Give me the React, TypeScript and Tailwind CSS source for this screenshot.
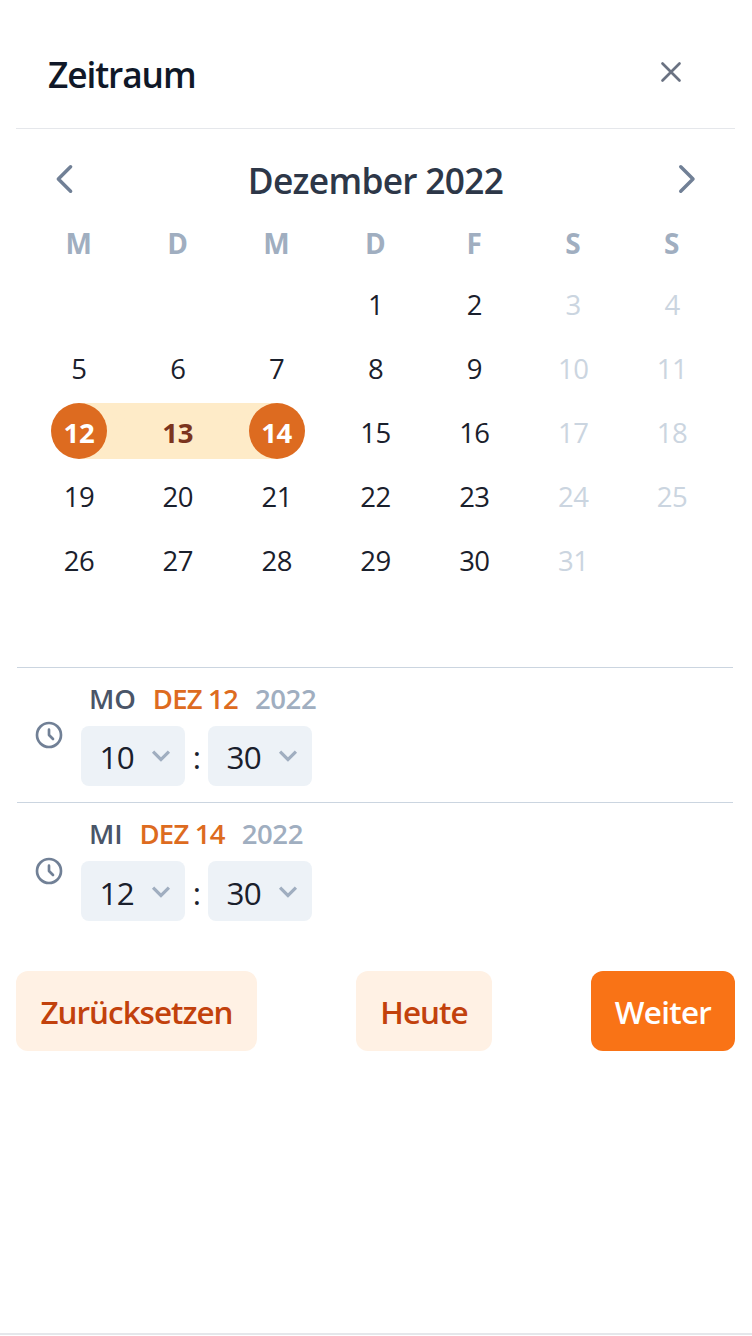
import React from "react";

const weekdays = ["M", "D", "M", "D", "F", "S", "S"];
const cells: (number | null)[] = [null, null, null, ...Array.from({ length: 31 }, (_, i) => i + 1), null];

function Chevron({ dir }: { dir: "left" | "right" }) {
  return (
    <svg className="h-[42px] w-[42px] text-[#718096]" viewBox="0 0 24 24" fill="none" stroke="currentColor" strokeWidth="2" strokeLinecap="round" strokeLinejoin="round">
      <path d={dir === "left" ? "M15.2 19l-7-7 7-7" : "M9 5l7 7-7 7"} />
    </svg>
  );
}

function Day({ day, weekend }: { day: number | null; weekend: boolean }) {
  if (day === null) return <div className="h-16" />;
  if (day === 12 || day === 14) {
    return (
      <div
        className={
          day === 12
            ? "my-1 flex h-14 justify-center bg-linear-to-r from-transparent from-50% to-[#feebc8] to-50%"
            : "my-1 flex h-14 justify-center bg-linear-to-l from-transparent from-50% to-[#feebc8] to-50%"
        }
      >
        <button className="h-14 w-14 rounded-full bg-[#dd6b20] pt-[3px] font-bold tracking-[-0.3px] text-white">{day}</button>
      </div>
    );
  }
  if (day === 13) {
    return (
      <div className="my-1 flex h-14 items-center justify-center bg-[#feebc8] pt-[3px] font-bold tracking-[-0.3px] text-[#7b341e]">{day}</div>
    );
  }
  return (
    <div className={weekend ? "flex h-16 items-center justify-center pt-[3px] text-[#cbd5e0]" : "flex h-16 items-center justify-center pt-[3px] text-[#1a202c]"}>
      {day}
    </div>
  );
}

function Select({ value }: { value: string }) {
  return (
    <button className="flex h-[60px] w-[104px] items-center justify-between rounded-lg bg-[#edf2f7] pr-2 pl-[18.6px]">
      <span className="pt-[2.1px]">{value}</span>
      <svg className="mt-[0.4px] h-8 w-8 fill-[#a0aec0]" viewBox="0 0 20 20">
        <path d="M9.293 12.95l.707.707L15.657 8l-1.414-1.414L10 10.828 5.757 6.586 4.343 8z" />
      </svg>
    </button>
  );
}

function TimeRow({ weekday, date, hour, minute }: { weekday: string; date: string; hour: string; minute: string }) {
  return (
    <div className="mr-[2px] ml-px flex items-center border-t border-[#cbd5e0] pl-[16.4px]">
      <svg className="h-8 w-8 text-[#718096]" viewBox="0 0 24 24" fill="none" stroke="currentColor" strokeWidth="2" strokeLinecap="round" strokeLinejoin="round">
        <path d="M12 8v4l3 3m6-3a9 9 0 11-18 0 9 9 0 0118 0z" />
      </svg>
      <div className="ml-[15.6px] pb-[16.4px]">
        <div className="flex h-[58px] items-center gap-[17px] pt-[3px] pl-2 text-[27.5px] font-semibold">
          <span className="tracking-[-0.1px] text-[#4a5568]">{weekday}</span>
          <span className="tracking-[-0.8px] text-[#dd6b20]">{date}</span>
          <span className="tracking-[-0.4px] text-[#a0aec0]">2022</span>
        </div>
        <div className="flex items-center text-[31.4px] tracking-[-0.9px] text-[#1a202c]">
          <Select value={hour} />
          <span className="w-[23px] pt-[2.1px] text-center">:</span>
          <Select value={minute} />
        </div>
      </div>
    </div>
  );
}

export default function App() {
  return (
    <div className="flex h-[1336px] w-[752px] flex-col bg-white pr-[17px] pl-4 font-['Open_Sans','Noto_Sans',sans-serif] leading-none">
      <header className="flex h-[129px] shrink-0 items-center justify-between border-b border-gray-200 pt-[21px] pr-[47px] pl-8">
        <h1 className="text-[35.3px] font-semibold tracking-[-1.1px] text-gray-900">Zeitraum</h1>
        <button className="-mt-[5px]">
          <svg className="h-[34px] w-[34px] text-gray-500" viewBox="0 0 24 24" fill="none" stroke="currentColor" strokeWidth="1.9" strokeLinecap="round">
            <path d="M6 18L18 6M6 6l12 12" />
          </svg>
        </button>
      </header>

      <section className="h-[538px] shrink-0">
        <div className="flex h-[100px] items-center justify-between px-7">
          <Chevron dir="left" />
          <h2 className="pt-[3px] text-[35.3px] font-semibold tracking-[-0.7px] text-[#2d3748]">Dezember 2022</h2>
          <Chevron dir="right" />
        </div>
        <div className="mx-[13.5px] grid grid-cols-7 text-[27.5px] tracking-[-0.5px]">
          {weekdays.map((d, i) => (
            <div key={i} className="mb-[15px] flex h-[27px] items-center justify-center pr-px text-[28px] font-bold text-[#a0aec0]">{d}</div>
          ))}
          {cells.map((d, i) => (
            <Day key={i} day={d} weekend={i % 7 > 4} />
          ))}
        </div>
      </section>

      <TimeRow weekday="MO" date="DEZ 12" hour="10" minute="30" />
      <TimeRow weekday="MI" date="DEZ 14" hour="12" minute="30" />

      <footer className="mt-[33.2px] flex h-20 shrink-0 justify-between text-[31.4px] font-semibold">
        <button className="w-[241px] rounded-xl bg-[#fff1e4] pt-px tracking-[-1px] text-[#c2410c]">Zurücksetzen</button>
        <button className="w-[136px] rounded-xl bg-[#fff1e4] pt-px tracking-[-0.9px] text-[#c2410c]">Heute</button>
        <button className="w-[144px] rounded-xl bg-[#f97316] pt-px tracking-[-0.7px] text-white">Weiter</button>
      </footer>
      <div className="-mr-[17px] -ml-4 mt-auto mb-px h-[2px] shrink-0 bg-gray-200" />
    </div>
  );
}
